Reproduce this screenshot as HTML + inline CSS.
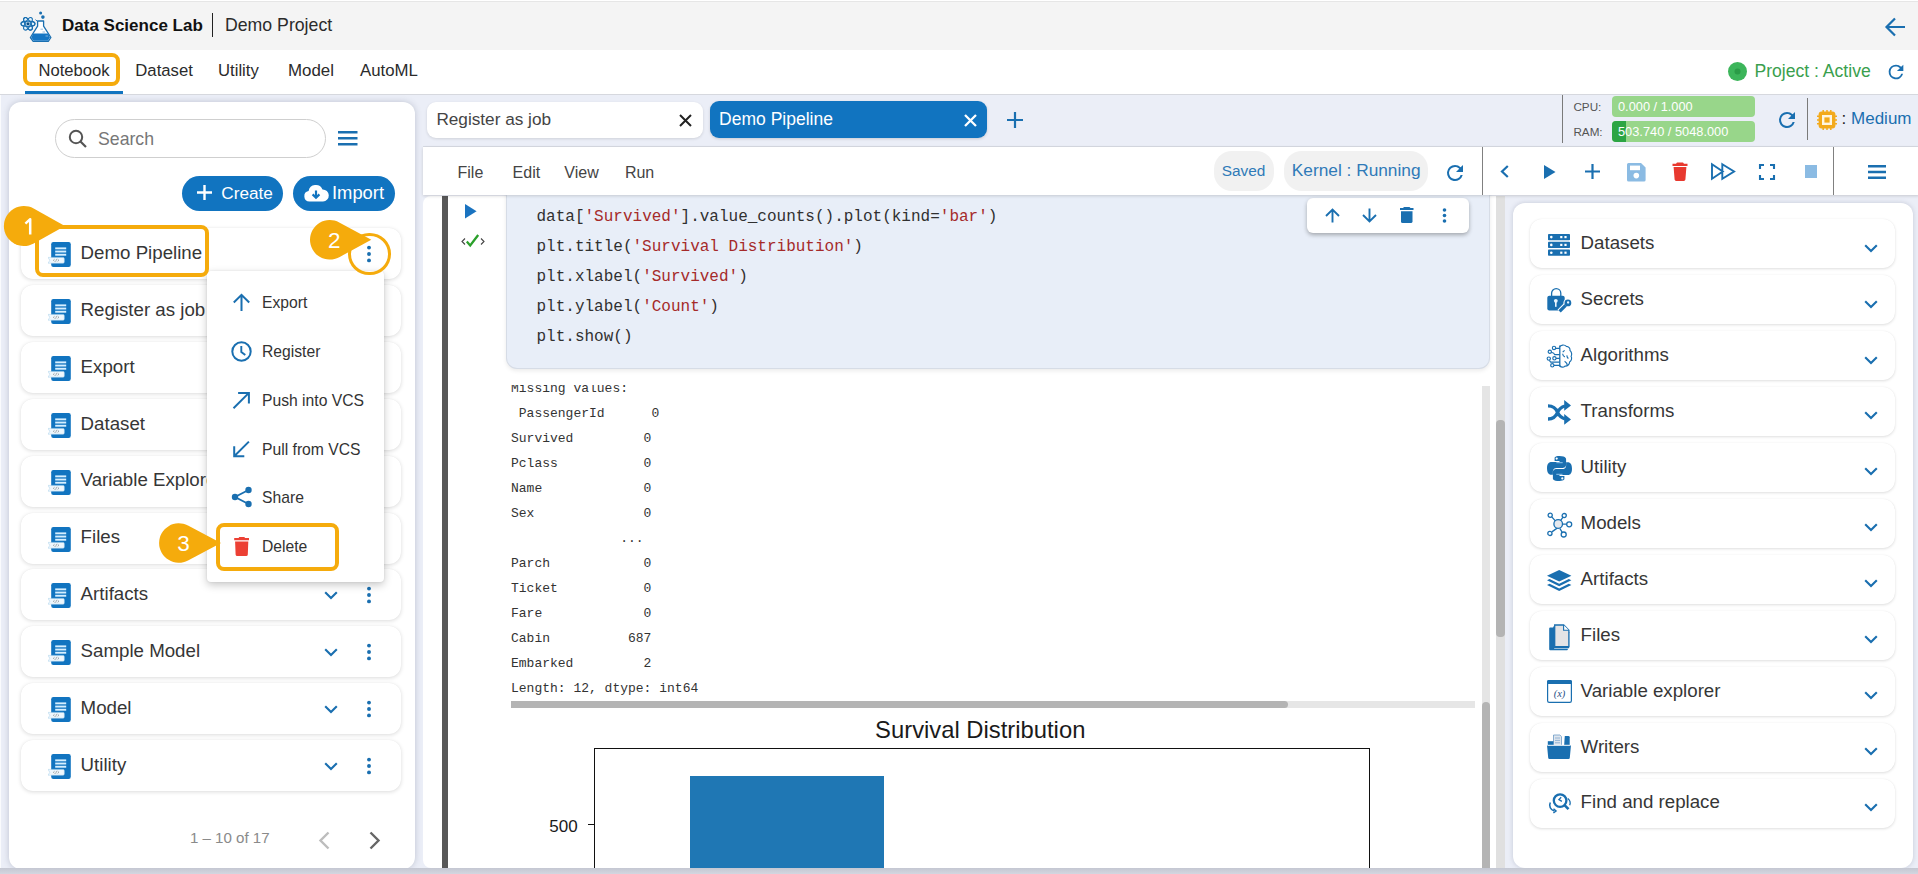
<!DOCTYPE html>
<html><head><meta charset="utf-8"><style>
*{box-sizing:border-box;margin:0;padding:0}
html,body{width:1918px;height:874px;overflow:hidden}
body{position:relative;background:#ebeef7;font-family:"Liberation Sans",sans-serif;color:#2b2b2b}
.a{position:absolute}
.t{position:absolute;line-height:1;white-space:pre}
svg{position:absolute;overflow:visible}
.card{position:absolute;left:21px;width:380px;height:51px;background:#fff;border-radius:12px;box-shadow:0 1px 4px rgba(0,0,0,.14),0 0 1px rgba(0,0,0,.06)}
.rcard{position:absolute;left:1530px;width:365px;height:49px;background:#fff;border-radius:12px;box-shadow:0 1px 3px rgba(0,0,0,.13),0 0 1px rgba(0,0,0,.06)}
.ob{position:absolute;border:4px solid #f5ab0c;border-radius:8px}
</style></head><body>
<svg width="0" height="0" style="position:absolute"><defs>
<symbol id="nbicon" viewBox="0 0 24 26"><rect x="3.2" y="0" width="19.6" height="25" rx="2.2" fill="#1174c0"/><rect x="7.2" y="5.4" width="11" height="1.9" fill="#d6efff"/><rect x="7.2" y="8.6" width="11" height="1.9" fill="#d6efff"/><rect x="7.2" y="11.8" width="11" height="1.9" fill="#d6efff"/><path d="M0 15.4h15a1.3 1.3 0 0 1 1.3 1.3v3.2a1.3 1.3 0 0 1-1.3 1.3H0l1.8-2.9z" fill="#eef7fd" stroke="#a9d0ea" stroke-width=".5"/><path d="M6.6 17.2l-1.3 1.1 1.3 1.1M9.6 17.2l1.3 1.1-1.3 1.1M8.6 16.9l-1 2.9" fill="none" stroke="#666" stroke-width=".5"/></symbol>
<symbol id="chev" viewBox="0 0 14 9"><path d="M1.2 1.2L7 7l5.8-5.8" fill="none" stroke="#1a6fb0" stroke-width="2.1"/></symbol>
<symbol id="kebab" viewBox="0 0 6 18"><circle cx="3" cy="2.6" r="1.95" fill="#1a6fb0"/><circle cx="3" cy="9" r="1.95" fill="#1a6fb0"/><circle cx="3" cy="15.4" r="1.95" fill="#1a6fb0"/></symbol>
<symbol id="refresh" viewBox="0 0 24 24"><path d="M17.65 6.35A7.96 7.96 0 0 0 12 4a8 8 0 1 0 7.73 10h-2.08A6 6 0 1 1 12 6c1.66 0 3.14.69 4.22 1.78L13 11h7V4l-2.35 2.35z" fill="#1a6fb0"/></symbol>
</defs></svg>
<div class="a" style="left:0;top:0;width:1918px;height:50px;background:#f4f4f4;border-top:1px solid #fff"></div><div class="a" style="left:0;top:1px;width:1918px;height:1px;background:#e6e6e6"></div>
<svg style="left:15px;top:5px" width="45" height="40" viewBox="0 0 45 40">
<g fill="#e3f3fd" stroke="#1a6fb0" stroke-width="1.1"><ellipse cx="13" cy="18.8" rx="7" ry="2.7"/><ellipse cx="13" cy="18.8" rx="7" ry="2.7" transform="rotate(60 13 18.8)"/><ellipse cx="13" cy="18.8" rx="7" ry="2.7" transform="rotate(-60 13 18.8)"/></g>
<g fill="none" stroke="#1a6fb0" stroke-width="1.1"><ellipse cx="13" cy="18.8" rx="7" ry="2.7" transform="rotate(60 13 18.8)"/><ellipse cx="13" cy="18.8" rx="7" ry="2.7"/></g>
<circle cx="13" cy="18.8" r="1.6" fill="#0d4f86"/>
<path d="M22.6 16H28.6V21.2L35.9 32.5L33.3 36.4H18.2L15.4 32.5L22.6 21.2Z" fill="#fff" stroke="#1a6fb0" stroke-width="1.3" stroke-linejoin="round"/>
<path d="M22 16.2l-1.4-1.6" stroke="#1a6fb0" stroke-width="1"/>
<path d="M18.2 28.6H33.2L35 32.5L32.8 35.7H18.7L16.3 32.5Z" fill="#1576c4"/>
<path d="M25.5 24.2h2.5M27.5 27h2.6M30.5 31h2.6" stroke="#8cb8dc" stroke-width=".9"/>
<circle cx="25.6" cy="8" r="1.5" fill="#1a6fb0"/><circle cx="27.9" cy="12.1" r="1.8" fill="#1a6fb0"/>
</svg>
<div class="t" style="left:62.0px;top:17.00px;font-size:17px;color:#111;font-weight:700;">Data Science Lab</div>
<div class="a" style="left:211.5px;top:13px;width:1.6px;height:24px;background:#222"></div>
<div class="t" style="left:225.0px;top:17.00px;font-size:17.7px;color:#2b2b2b;font-weight:400;">Demo Project</div>
<svg style="left:1884px;top:16px" width="22" height="22" viewBox="0 0 22 22"><path d="M21 11H3M11 2.5L2.5 11l8.5 8.5" fill="none" stroke="#1a6fb0" stroke-width="2.2"/></svg>
<div class="a" style="left:0;top:50px;width:1918px;height:45px;background:#fff;border-bottom:1px solid #d6d8de"></div>
<div class="t" style="left:38.5px;top:63.00px;font-size:16.6px;color:#2b2b2b;font-weight:400;">Notebook</div>
<div class="t" style="left:135.3px;top:63.00px;font-size:16.7px;color:#2b2b2b;font-weight:400;">Dataset</div>
<div class="t" style="left:218.0px;top:63.00px;font-size:16.7px;color:#2b2b2b;font-weight:400;">Utility</div>
<div class="t" style="left:288.0px;top:63.00px;font-size:16.9px;color:#2b2b2b;font-weight:400;">Model</div>
<div class="t" style="left:360.0px;top:63.00px;font-size:16.8px;color:#2b2b2b;font-weight:400;">AutoML</div>
<div class="a" style="left:25px;top:91px;width:98px;height:3px;background:#1174c0"></div>
<div class="ob" style="left:23px;top:53px;width:96.5px;height:33px"></div>
<svg style="left:1728px;top:61.8px" width="19" height="19" viewBox="0 0 19 19"><circle cx="9.5" cy="9.5" r="9.5" fill="#3cb55a"/><circle cx="9.5" cy="9.5" r="3" fill="#2a9c47"/></svg>
<div class="t" style="left:1754.4px;top:63.00px;font-size:17.6px;color:#3a9f4e;font-weight:400;">Project : Active</div>
<svg style="left:1884.5px;top:61px" width="22" height="22"><use href="#refresh"/></svg>
<div class="a" style="left:9px;top:102px;width:406px;height:767px;background:#fff;border-radius:12px;box-shadow:0 0 6px rgba(60,70,100,.25)"></div>
<div class="a" style="left:55px;top:118.5px;width:271px;height:39px;border:1px solid #cfcfcf;border-radius:19.5px;background:#fff"></div>
<svg style="left:68px;top:129px" width="20" height="20" viewBox="0 0 20 20"><circle cx="8" cy="8" r="6.2" fill="none" stroke="#555" stroke-width="2"/><path d="M12.5 12.5l5.5 5.5" stroke="#555" stroke-width="2.2"/></svg>
<div class="t" style="left:98.0px;top:131.00px;font-size:17.7px;color:#777;font-weight:400;">Search</div>
<svg style="left:338px;top:131px" width="20" height="15" viewBox="0 0 20 15"><path d="M0 1.3h19.5M0 7.3h19.5M0 13.3h19.5" stroke="#1a6fb0" stroke-width="2.4"/></svg>
<div class="a" style="left:182px;top:176px;width:101px;height:35px;border-radius:18px;background:#1174c0"></div>
<svg style="left:197px;top:185px" width="15" height="15" viewBox="0 0 15 15"><path d="M7.5 0v15M0 7.5h15" stroke="#fff" stroke-width="2.4"/></svg>
<div class="t" style="left:221.3px;top:185.00px;font-size:17.2px;color:#fff;font-weight:400;">Create</div>
<div class="a" style="left:293px;top:176px;width:102px;height:35px;border-radius:18px;background:#1174c0"></div>
<svg style="left:303.5px;top:183px" width="24" height="19" viewBox="0 0 24 19"><path d="M5.5 18.5A5.3 5.3 0 0 1 4.6 8a7.3 7.3 0 0 1 13.9-1.6A5.4 5.4 0 0 1 19 18.5z" fill="#fff"/><path d="M12 7.5v7M8.6 11.4l3.4 3.4 3.4-3.4" fill="none" stroke="#1174c0" stroke-width="2.2"/></svg>
<div class="t" style="left:332.0px;top:184.00px;font-size:18.35px;color:#fff;font-weight:400;">Import</div>
<div class="card" style="top:228.0px"></div>
<svg style="left:48px;top:242.0px" width="24" height="26"><use href="#nbicon"/></svg>
<div class="t" style="left:80.6px;top:244.00px;font-size:18.7px;color:#363636;font-weight:400;">Demo Pipeline</div>
<div class="card" style="top:284.9px"></div>
<svg style="left:48px;top:298.9px" width="24" height="26"><use href="#nbicon"/></svg>
<div class="t" style="left:80.6px;top:301.00px;font-size:18.7px;color:#363636;font-weight:400;">Register as job</div>
<div class="card" style="top:341.8px"></div>
<svg style="left:48px;top:355.8px" width="24" height="26"><use href="#nbicon"/></svg>
<div class="t" style="left:80.6px;top:358.00px;font-size:18.7px;color:#363636;font-weight:400;">Export</div>
<div class="card" style="top:398.7px"></div>
<svg style="left:48px;top:412.7px" width="24" height="26"><use href="#nbicon"/></svg>
<div class="t" style="left:80.6px;top:415.00px;font-size:18.7px;color:#363636;font-weight:400;">Dataset</div>
<div class="card" style="top:455.6px"></div>
<svg style="left:48px;top:469.6px" width="24" height="26"><use href="#nbicon"/></svg>
<div class="t" style="left:80.6px;top:471.00px;font-size:18.7px;color:#363636;font-weight:400;">Variable Explorer</div>
<div class="card" style="top:512.5px"></div>
<svg style="left:48px;top:526.5px" width="24" height="26"><use href="#nbicon"/></svg>
<div class="t" style="left:80.6px;top:528.00px;font-size:18.7px;color:#363636;font-weight:400;">Files</div>
<div class="card" style="top:569.4px"></div>
<svg style="left:48px;top:583.4px" width="24" height="26"><use href="#nbicon"/></svg>
<div class="t" style="left:80.6px;top:585.00px;font-size:18.7px;color:#363636;font-weight:400;">Artifacts</div>
<svg style="left:324px;top:591.4px" width="14" height="9"><use href="#chev"/></svg>
<svg style="left:366px;top:586.4px" width="6" height="18"><use href="#kebab"/></svg>
<div class="card" style="top:626.3px"></div>
<svg style="left:48px;top:640.3px" width="24" height="26"><use href="#nbicon"/></svg>
<div class="t" style="left:80.6px;top:642.00px;font-size:18.7px;color:#363636;font-weight:400;">Sample Model</div>
<svg style="left:324px;top:648.3px" width="14" height="9"><use href="#chev"/></svg>
<svg style="left:366px;top:643.3px" width="6" height="18"><use href="#kebab"/></svg>
<div class="card" style="top:683.2px"></div>
<svg style="left:48px;top:697.2px" width="24" height="26"><use href="#nbicon"/></svg>
<div class="t" style="left:80.6px;top:699.00px;font-size:18.7px;color:#363636;font-weight:400;">Model</div>
<svg style="left:324px;top:705.2px" width="14" height="9"><use href="#chev"/></svg>
<svg style="left:366px;top:700.2px" width="6" height="18"><use href="#kebab"/></svg>
<div class="card" style="top:740.1px"></div>
<svg style="left:48px;top:754.1px" width="24" height="26"><use href="#nbicon"/></svg>
<div class="t" style="left:80.6px;top:756.00px;font-size:18.7px;color:#363636;font-weight:400;">Utility</div>
<svg style="left:324px;top:762.1px" width="14" height="9"><use href="#chev"/></svg>
<svg style="left:366px;top:757.1px" width="6" height="18"><use href="#kebab"/></svg>
<svg style="left:366px;top:245px" width="6" height="18"><use href="#kebab"/></svg>
<div class="t" style="left:189.9px;top:830.00px;font-size:15.1px;color:#8a8a8a;font-weight:400;">1 – 10 of 17</div>
<svg style="left:317px;top:831px" width="14" height="19" viewBox="0 0 14 19"><path d="M11.5 1.5L3.5 9.5l8 8" fill="none" stroke="#bdbdbd" stroke-width="2.4"/></svg>
<svg style="left:368px;top:831px" width="14" height="19" viewBox="0 0 14 19"><path d="M2.5 1.5l8 8-8 8" fill="none" stroke="#666" stroke-width="2.4"/></svg>
<div class="a" style="left:207px;top:271px;width:177px;height:311px;background:#fff;border-radius:4px;box-shadow:0 3px 8px rgba(0,0,0,.22),0 0 2px rgba(0,0,0,.1)"></div>
<div class="t" style="left:262.0px;top:295.00px;font-size:15.7px;color:#333;font-weight:400;">Export</div>
<div class="t" style="left:262.0px;top:344.00px;font-size:15.7px;color:#333;font-weight:400;">Register</div>
<div class="t" style="left:262.0px;top:393.00px;font-size:15.7px;color:#333;font-weight:400;">Push into VCS</div>
<div class="t" style="left:262.0px;top:442.00px;font-size:15.7px;color:#333;font-weight:400;">Pull from VCS</div>
<div class="t" style="left:262.0px;top:490.00px;font-size:15.7px;color:#333;font-weight:400;">Share</div>
<div class="t" style="left:262.0px;top:539.00px;font-size:15.7px;color:#333;font-weight:400;">Delete</div>
<svg style="left:232px;top:293px" width="19" height="19" viewBox="0 0 19 19"><path d="M9.5 18V2M1.8 9.5L9.5 1.8l7.7 7.7" fill="none" stroke="#1a6fb0" stroke-width="2"/></svg>
<svg style="left:231px;top:341px" width="21" height="21" viewBox="0 0 21 21"><circle cx="10.5" cy="10.5" r="9.2" fill="none" stroke="#1a6fb0" stroke-width="2"/><path d="M10.3 5v6l4 3" fill="none" stroke="#1a6fb0" stroke-width="1.9"/></svg>
<svg style="left:232px;top:391px" width="19" height="19" viewBox="0 0 19 19"><path d="M1.5 17.3L16.9 1.9M6.1 1.9h10.8v10.7" fill="none" stroke="#1a6fb0" stroke-width="2"/></svg>
<svg style="left:232px;top:440px" width="19" height="19" viewBox="0 0 19 19"><path d="M16.9 1.6L2.2 16.2M2.2 6.2V16.2H12.3" fill="none" stroke="#1a6fb0" stroke-width="2"/></svg>
<svg style="left:231px;top:486px" width="22" height="22" viewBox="0 0 22 22"><circle cx="17.5" cy="4" r="3.2" fill="#1a6fb0"/><circle cx="4" cy="11" r="3.2" fill="#1a6fb0"/><circle cx="17.5" cy="18" r="3.2" fill="#1a6fb0"/><path d="M17.5 4L4 11l13.5 7" fill="none" stroke="#1a6fb0" stroke-width="1.8"/></svg>
<svg style="left:234px;top:536.8px" width="16" height="20" viewBox="0 0 16 20"><path d="M5.2 0h5.2l.6.9H15v2.4H.2V.9h4.4z" fill="#ec4034"/><path d="M1.1 4.4h13.2l-.5 13.2a1.6 1.6 0 0 1-1.6 1.5H3.2a1.6 1.6 0 0 1-1.6-1.5z" fill="#ec4034"/></svg>
<div class="ob" style="left:35.3px;top:225px;width:174.2px;height:51.5px"></div>
<div class="ob" style="left:216px;top:523px;width:123px;height:47.5px"></div>
<div class="a" style="left:348.4px;top:233px;width:42.4px;height:41.6px;border:3.6px solid #f5ab0c;border-radius:50%"></div>
<svg style="left:0;top:0" width="1" height="1"><path d="M64.90 226.00L33.66 208.54A20 20 0 1 0 33.66 243.46Z" fill="#f5ab0c"/></svg>
<svg style="left:24px;top:217.5px" width="9" height="17" viewBox="0 0 9 17"><path d="M6.2 16.5V1.2L1.4 5.6" fill="none" stroke="#fff" stroke-width="2.5" stroke-linejoin="round"/></svg>
<svg style="left:0;top:0" width="1" height="1"><path d="M371.30 239.80L339.25 222.40A19.8 19.8 0 1 0 339.25 257.20Z" fill="#f5ab0c"/></svg>
<div class="t" style="left:334.2px;top:230.00px;font-size:22.5px;color:#fff;font-weight:400;transform:translateX(-50%)">2</div>
<svg style="left:0;top:0" width="1" height="1"><path d="M221.00 543.00L188.00 525.58A19.7 19.7 0 1 0 188.00 560.42Z" fill="#f5ab0c"/></svg>
<div class="t" style="left:183.6px;top:533.00px;font-size:22.5px;color:#fff;font-weight:400;transform:translateX(-50%)">3</div>
<div class="a" style="left:422.5px;top:146px;width:1496px;height:1px;background:#d8dce4"></div>
<div class="a" style="left:426.7px;top:101.7px;width:276px;height:36px;background:#fff;border-radius:9px;box-shadow:0 1px 3px rgba(0,0,0,.12)"></div>
<div class="t" style="left:436.4px;top:111.00px;font-size:17.2px;color:#444;font-weight:400;">Register as job</div>
<svg style="left:679px;top:113.5px" width="13" height="13" viewBox="0 0 13 13"><path d="M1 1l11 11M12 1L1 12" stroke="#222" stroke-width="2"/></svg>
<div class="a" style="left:710.3px;top:101px;width:277px;height:37px;background:#1174c0;border-radius:9px;box-shadow:0 1px 3px rgba(0,0,0,.15)"></div>
<div class="t" style="left:719.1px;top:111.00px;font-size:17.5px;color:#fff;font-weight:400;">Demo Pipeline</div>
<svg style="left:964px;top:113.5px" width="13" height="13" viewBox="0 0 13 13"><path d="M1 1l11 11M12 1L1 12" stroke="#fff" stroke-width="2.3"/></svg>
<svg style="left:1007px;top:111.5px" width="16" height="16" viewBox="0 0 16 16"><path d="M8 0v16M0 8h16" stroke="#1a6fb0" stroke-width="2.2"/></svg>
<div class="a" style="left:1562px;top:95px;width:1px;height:48px;background:#7a7a7a"></div>
<div class="t" style="left:1573.4px;top:101.00px;font-size:11.7px;color:#555;font-weight:400;">CPU:</div>
<div class="t" style="left:1573.4px;top:126.00px;font-size:11.7px;color:#555;font-weight:400;">RAM:</div>
<div class="a" style="left:1612px;top:96px;width:143px;height:20.5px;background:#98d68a;border-radius:4px"></div>
<div class="a" style="left:1612px;top:121px;width:143px;height:20.8px;background:#98d68a;border-radius:4px;overflow:hidden"><div style="width:14px;height:100%;background:#2ca544"></div></div>
<div class="t" style="left:1618.0px;top:101.00px;font-size:12.8px;color:#fff;font-weight:400;">0.000 / 1.000</div>
<div class="t" style="left:1618.0px;top:126.00px;font-size:12.8px;color:#fff;font-weight:400;">503.740 / 5048.000</div>
<svg style="left:1774.5px;top:107.5px" width="24" height="24"><use href="#refresh"/></svg>
<div class="a" style="left:1807px;top:98px;width:1px;height:42px;background:#7a7a7a"></div>
<svg style="left:1816.5px;top:109.5px" width="20" height="20" viewBox="0 0 20 20"><rect x="1.6" y="1.6" width="16.8" height="16.8" rx="3" fill="#f3aa1c"/><rect x="5" y="5" width="10" height="10" fill="#fff6e0"/><rect x="7.4" y="7.4" width="5.2" height="5.2" fill="#f3aa1c"/><path d="M6.2 0v2M10 0v2M13.8 0v2M6.2 18v2M10 18v2M13.8 18v2M0 6.2h2M0 10h2M0 13.8h2M18 6.2h2M18 10h2M18 13.8h2" stroke="#f3aa1c" stroke-width="1.5"/></svg>
<div class="t" style="left:1841.6px;top:110px;font-size:17px;color:#1a6fb0"><span style="color:#222">:</span> Medium</div>
<div class="a" style="left:422.5px;top:196px;width:1082px;height:672px;background:#fff;overflow:hidden;border-radius:8px 0 0 8px">
<div class="a" style="left:19.5px;top:0;width:6px;height:680px;background:#585858"></div>
</div>
<div class="a" style="left:505.5px;top:180px;width:984px;height:188.5px;background:#e8eef8;border:1px solid #d6dce6;border-top:none;border-radius:0 0 11px 11px;box-shadow:0 2px 4px rgba(0,0,0,.08)"></div>
<svg style="left:465px;top:204.4px" width="12" height="14.4" viewBox="0 0 12 14.4"><path d="M0 0l11.6 7.2L0 14.4z" fill="#1a73c0"/></svg>
<svg style="left:461px;top:233.5px" width="24" height="13" viewBox="0 0 24 13"><path d="M4 4.5L1 7.5l3 3M20 4.5l3 3-3 3" fill="none" stroke="#444" stroke-width="1.1"/><path d="M5.8 7.6l3.4 3.8L17.2 1" fill="none" stroke="#2aa02a" stroke-width="2.3"/></svg>
<div class="t" style="left:536.5px;top:209.00px;font-size:16px;color:#303030;font-family:'Liberation Mono',monospace;">data[<span style="color:#a52a2a">'Survived'</span>].value_counts().plot(kind=<span style="color:#a52a2a">'bar'</span>)</div>
<div class="t" style="left:536.5px;top:239.00px;font-size:16px;color:#303030;font-family:'Liberation Mono',monospace;">plt.title(<span style="color:#a52a2a">'Survival Distribution'</span>)</div>
<div class="t" style="left:536.5px;top:269.00px;font-size:16px;color:#303030;font-family:'Liberation Mono',monospace;">plt.xlabel(<span style="color:#a52a2a">'Survived'</span>)</div>
<div class="t" style="left:536.5px;top:299.00px;font-size:16px;color:#303030;font-family:'Liberation Mono',monospace;">plt.ylabel(<span style="color:#a52a2a">'Count'</span>)</div>
<div class="t" style="left:536.5px;top:329.00px;font-size:16px;color:#303030;font-family:'Liberation Mono',monospace;">plt.show()</div>
<div class="a" style="left:1307px;top:197.6px;width:162px;height:35.8px;background:#fff;border-radius:6px;box-shadow:0 2px 4px rgba(0,0,0,.3)"></div>
<svg style="left:1324.5px;top:207.5px" width="15" height="15" viewBox="0 0 15 15"><path d="M7.5 14.5V1.5M1 8l6.5-6.5L14 8" fill="none" stroke="#1a6fb0" stroke-width="1.9"/></svg>
<svg style="left:1362px;top:207.5px" width="15" height="15" viewBox="0 0 15 15"><path d="M7.5 .5v13M1 7l6.5 6.5L14 7" fill="none" stroke="#1a6fb0" stroke-width="1.9"/></svg>
<svg style="left:1400px;top:206.5px" width="13.5" height="16" viewBox="0 0 13.5 16"><path d="M4 0h5.5l1 1.1h3v2H0v-2h3z" fill="#1a6fb0"/><path d="M1 4.2h11.5V14.4a1.6 1.6 0 0 1-1.6 1.6H2.6A1.6 1.6 0 0 1 1 14.4z" fill="#1a6fb0"/></svg>
<svg style="left:1442px;top:207.5px" width="5" height="15" viewBox="0 0 5 15"><circle cx="2.5" cy="2" r="1.8" fill="#1a6fb0"/><circle cx="2.5" cy="7.5" r="1.8" fill="#1a6fb0"/><circle cx="2.5" cy="13" r="1.8" fill="#1a6fb0"/></svg>
<div class="a" style="left:505px;top:385px;width:977px;height:483px;overflow:hidden">
<div class="t" style="left:6px;top:-3.00px;font-size:13px;font-family:'Liberation Mono',monospace;color:#333">Missing values:</div>
<div class="t" style="left:6px;top:22.00px;font-size:13px;font-family:'Liberation Mono',monospace;color:#333"> PassengerId      0</div>
<div class="t" style="left:6px;top:47.00px;font-size:13px;font-family:'Liberation Mono',monospace;color:#333">Survived         0</div>
<div class="t" style="left:6px;top:72.00px;font-size:13px;font-family:'Liberation Mono',monospace;color:#333">Pclass           0</div>
<div class="t" style="left:6px;top:97.00px;font-size:13px;font-family:'Liberation Mono',monospace;color:#333">Name             0</div>
<div class="t" style="left:6px;top:122.00px;font-size:13px;font-family:'Liberation Mono',monospace;color:#333">Sex              0</div>
<div class="t" style="left:6px;top:147.00px;font-size:13px;font-family:'Liberation Mono',monospace;color:#333">              ...</div>
<div class="t" style="left:6px;top:172.00px;font-size:13px;font-family:'Liberation Mono',monospace;color:#333">Parch            0</div>
<div class="t" style="left:6px;top:197.00px;font-size:13px;font-family:'Liberation Mono',monospace;color:#333">Ticket           0</div>
<div class="t" style="left:6px;top:222.00px;font-size:13px;font-family:'Liberation Mono',monospace;color:#333">Fare             0</div>
<div class="t" style="left:6px;top:247.00px;font-size:13px;font-family:'Liberation Mono',monospace;color:#333">Cabin          687</div>
<div class="t" style="left:6px;top:272.00px;font-size:13px;font-family:'Liberation Mono',monospace;color:#333">Embarked         2</div>
<div class="t" style="left:6px;top:297.00px;font-size:13px;font-family:'Liberation Mono',monospace;color:#333">Length: 12, dtype: int64</div>
</div>
<div class="a" style="left:511px;top:700.5px;width:964px;height:7px;background:#e6e6e6"></div>
<div class="a" style="left:511px;top:700.5px;width:777px;height:7px;background:#b4b4b4;border-radius:0 4px 4px 0"></div>
<div class="a" style="left:1482px;top:386px;width:8px;height:482px;background:#e5e5e5"></div>
<div class="a" style="left:1482px;top:702px;width:8px;height:166px;background:#b4b4b4;border-radius:4px 4px 0 0"></div>
<div class="t" style="left:875.1px;top:718.00px;font-size:23.8px;color:#1a1a1a;font-weight:400;">Survival Distribution</div>
<div class="a" style="left:594px;top:747.6px;width:776px;height:130px;border:1.4px solid #111;background:#fff"></div>
<div class="a" style="left:689.8px;top:775.9px;width:194px;height:100px;background:#1f77b4"></div>
<div class="a" style="left:588px;top:824px;width:6px;height:1.3px;background:#111"></div>
<div class="t" style="left:549.3px;top:818.00px;font-size:17px;color:#1a1a1a;font-weight:400;">500</div>
<div class="a" style="left:1496px;top:196px;width:8.5px;height:672px;background:#e0e0e0"></div>
<div class="a" style="left:1496px;top:420px;width:8.5px;height:216.5px;background:#b4b4b4;border-radius:4px"></div>
<div class="a" style="left:1513px;top:203px;width:400px;height:665px;background:#fff;border-radius:12px;box-shadow:0 0 5px rgba(60,70,100,.22)"></div>
<div class="rcard" style="top:219.2px"></div>
<div class="t" style="left:1580.6px;top:234.00px;font-size:18.7px;color:#363636;font-weight:400;">Datasets</div>
<svg style="left:1864px;top:243.6px" width="14" height="9"><use href="#chev"/></svg>
<div class="rcard" style="top:275.1px"></div>
<div class="t" style="left:1580.6px;top:290.00px;font-size:18.7px;color:#363636;font-weight:400;">Secrets</div>
<svg style="left:1864px;top:299.5px" width="14" height="9"><use href="#chev"/></svg>
<div class="rcard" style="top:331.1px"></div>
<div class="t" style="left:1580.6px;top:346.00px;font-size:18.7px;color:#363636;font-weight:400;">Algorithms</div>
<svg style="left:1864px;top:355.5px" width="14" height="9"><use href="#chev"/></svg>
<div class="rcard" style="top:387.0px"></div>
<div class="t" style="left:1580.6px;top:402.00px;font-size:18.7px;color:#363636;font-weight:400;">Transforms</div>
<svg style="left:1864px;top:411.4px" width="14" height="9"><use href="#chev"/></svg>
<div class="rcard" style="top:442.9px"></div>
<div class="t" style="left:1580.6px;top:458.00px;font-size:18.7px;color:#363636;font-weight:400;">Utility</div>
<svg style="left:1864px;top:467.3px" width="14" height="9"><use href="#chev"/></svg>
<div class="rcard" style="top:498.8px"></div>
<div class="t" style="left:1580.6px;top:514.00px;font-size:18.7px;color:#363636;font-weight:400;">Models</div>
<svg style="left:1864px;top:523.2px" width="14" height="9"><use href="#chev"/></svg>
<div class="rcard" style="top:554.8px"></div>
<div class="t" style="left:1580.6px;top:570.00px;font-size:18.7px;color:#363636;font-weight:400;">Artifacts</div>
<svg style="left:1864px;top:579.2px" width="14" height="9"><use href="#chev"/></svg>
<div class="rcard" style="top:610.7px"></div>
<div class="t" style="left:1580.6px;top:626.00px;font-size:18.7px;color:#363636;font-weight:400;">Files</div>
<svg style="left:1864px;top:635.1px" width="14" height="9"><use href="#chev"/></svg>
<div class="rcard" style="top:666.6px"></div>
<div class="t" style="left:1580.6px;top:682.00px;font-size:18.7px;color:#363636;font-weight:400;">Variable explorer</div>
<svg style="left:1864px;top:691.0px" width="14" height="9"><use href="#chev"/></svg>
<div class="rcard" style="top:722.6px"></div>
<div class="t" style="left:1580.6px;top:738.00px;font-size:18.7px;color:#363636;font-weight:400;">Writers</div>
<svg style="left:1864px;top:747.0px" width="14" height="9"><use href="#chev"/></svg>
<div class="rcard" style="top:778.5px"></div>
<div class="t" style="left:1580.6px;top:793.00px;font-size:18.7px;color:#363636;font-weight:400;">Find and replace</div>
<svg style="left:1864px;top:802.9px" width="14" height="9"><use href="#chev"/></svg>
<svg style="left:1548px;top:234px" width="22" height="22" viewBox="0 0 22 22">
<rect x="0" y="0" width="22" height="6.2" rx=".8" fill="#1a6fb0"/><rect x="0" y="7.8" width="22" height="6.2" rx=".8" fill="#1a6fb0"/><rect x="0" y="15.6" width="22" height="6.2" rx=".8" fill="#1a6fb0"/>
<g fill="#fff"><circle cx="3.3" cy="3.1" r="1.3"/><circle cx="3.3" cy="10.9" r="1.3"/><circle cx="3.3" cy="18.7" r="1.3"/>
<rect x="12.2" y="2" width="2.2" height="2.2"/><rect x="16.4" y="2" width="2.2" height="2.2"/><rect x="12.2" y="9.8" width="2.2" height="2.2"/><rect x="16.4" y="9.8" width="2.2" height="2.2"/><rect x="12.2" y="17.6" width="2.2" height="2.2"/><rect x="16.4" y="17.6" width="2.2" height="2.2"/></g></svg>
<svg style="left:1547px;top:288px" width="24" height="24" viewBox="0 0 24 24">
<path d="M4.6 8V5.2a4.6 4.6 0 0 1 9.2 0V8" fill="none" stroke="#1a6fb0" stroke-width="1.3"/>
<rect x=".3" y="7.8" width="17.4" height="14.6" rx="2" fill="#1a6fb0"/>
<circle cx="8.8" cy="12.8" r="1.9" fill="#eaf6ff"/><rect x="8" y="12.8" width="1.6" height="6" fill="#eaf6ff"/>
<circle cx="20.9" cy="14.9" r="4.5" fill="#fff"/><path d="M18.6 17.4l-6.2 6.2" stroke="#fff" stroke-width="5.4"/>
<circle cx="20.9" cy="14.9" r="3.4" fill="#1a6fb0"/><path d="M18.6 17.4l-6 6" stroke="#1a6fb0" stroke-width="3.3"/>
<circle cx="21.1" cy="14.5" r="1.15" fill="#eaf6ff"/></svg>
<svg style="left:1547px;top:344px" width="25" height="25" viewBox="0 0 25 25" fill="none" stroke="#1a6fb0" stroke-width="1.15">
<path d="M12.8 1.6V22.8" stroke-width="1.3"/>
<path d="M12.8 2.8C13.6.9 17.4.2 19.4 2.4c2.3.1 3.9 1.9 3.6 4.1 1.8 1.4 2.1 4.2 1.1 5.8 1.1 1.9.4 4.7-1.5 5.6-.1 2.5-2 4.4-4.6 4.2-1.5 1.5-4.6 1.4-5.2-.6"/>
<path d="M17.6 6.4l-1.9 1.8M15.6 9.8c.2 1.6.8 2.7 2.3 3.1M19.8 11.3c.2 1.5.8 2.6 1.6 3.2M17.6 17.2c1.6.9 2.7 2.3 2.8 4.6"/>
<path d="M8.7 4.3h4.1M4.3 8.2c1.8.4 3.1 1.3 3.4 2.4h5.1M9 14.3h3.8M2.3 16.4l1.4 1.7h9.1M7 21.3h5.8"/>
<circle cx="7" cy="3.9" r="1.65"/><circle cx="2.8" cy="7.7" r="1.65"/><circle cx="1.8" cy="14.6" r="1.65"/><circle cx="7.4" cy="14.3" r="1.65"/><circle cx="5.3" cy="21.3" r="1.65"/></svg>
<svg style="left:1548px;top:400px" width="24" height="25" viewBox="0 0 24 25">
<path d="M0 5.8c5 0 8 2.6 9.6 6.5C11.2 8.6 13.5 7 17 6M0 19c5 0 8-2.6 9.6-6.6 1.6 3.6 3.9 5.5 7.4 6.6" fill="none" stroke="#1a6fb0" stroke-width="3.3"/>
<path d="M16.2 0l6.8 5.5-6.8 5.3zM16.2 14l6.8 5.4-6.8 5.4z" fill="#1a6fb0"/></svg>
<svg style="left:1547px;top:456px" width="25" height="25" viewBox="0 0 25 25">
<path d="M12.4 0C7.3 0 7.6 2.2 7.6 2.2v2.9h4.9V6H4.2S0 5.5 0 12.3c0 6.7 3.7 6.5 3.7 6.5h2.2v-3.2s-.1-3.7 3.6-3.7h6.1s3.5.1 3.5-3.4V3.3S19.6 0 12.4 0z" fill="#1a6fb0"/>
<path d="M12.6 25c5.1 0 4.8-2.2 4.8-2.2v-2.9h-4.9V19h8.3s4.2.5 4.2-6.3c0-6.7-3.7-6.5-3.7-6.5h-2.2v3.2s.1 3.7-3.6 3.7H9.4s-3.5-.1-3.5 3.4v5.9S5.4 25 12.6 25z" fill="#1a6fb0"/>
<circle cx="9.7" cy="2.6" r="1.1" fill="#fff"/><circle cx="15.3" cy="22.4" r="1.1" fill="#fff"/>
<path d="M9.4 6.7h6.3M9.3 18.3h6.2" stroke="#9fd0f5" stroke-width=".9"/></svg>
<svg style="left:1547px;top:513px" width="25" height="24" viewBox="0 0 25 24" fill="none" stroke="#1a6fb0" stroke-width="1.3">
<path d="M4.3 3.4l4.5 5M16.2 3.8l-3 4.4M10.5 14.9l-5.6 4M12.8 15.3l2.5 4.2M15.7 11.2h4.6"/>
<circle cx="11.2" cy="11" r="4.3" fill="#e6e9ee"/>
<circle cx="3.2" cy="2.3" r="2.1" fill="#fff"/><circle cx="17.2" cy="2.6" r="2.1" fill="#fff"/><circle cx="22.2" cy="11.3" r="2.5" fill="#fff"/><circle cx="2.9" cy="20.4" r="2.1" fill="#fff"/><circle cx="16.7" cy="21.5" r="2.5" fill="#fff"/></svg>
<svg style="left:1547px;top:570px" width="25" height="21" viewBox="0 0 25 21">
<path d="M12.2 0l12.2 5.8-12.2 5.8L0 5.8z" fill="#1a6fb0"/>
<path d="M0 10.3l2.6-1.2 9.6 4.6 9.6-4.6 2.6 1.2-12.2 5.9z" fill="#1a6fb0"/>
<path d="M0 15l2.6-1.2 9.6 4.6 9.6-4.6 2.6 1.2L12.2 21z" fill="#1a6fb0"/></svg>
<svg style="left:1548.5px;top:623.5px" width="23" height="26" viewBox="0 0 23 26">
<path d="M1.2 3.5h4v21.2h13.6v.8a.8.8 0 0 1-.8.8H1.2a1 1 0 0 1-1-1V4.5a1 1 0 0 1 1-1z" fill="#1a6fb0"/>
<path d="M4.2 2.5h10.3l5.6 5.8v15.9H4.2z" fill="#1a6fb0"/>
<path d="M5.7 1h9l5.2 5.3v16.4H5.7z" fill="#e4e4e6" stroke="#1a6fb0" stroke-width="1.3"/>
<path d="M14.6 1v5.3h5.3" fill="#fff" stroke="#1a6fb0" stroke-width="1.1"/></svg>
<svg style="left:1547px;top:680px" width="25" height="23" viewBox="0 0 25 23">
<rect x=".6" y=".6" width="23.8" height="21.8" rx="1.6" fill="#fff" stroke="#1a6fb0" stroke-width="1.2"/>
<path d="M1.5 0h22a1.5 1.5 0 0 1 1.5 1.5V4H0V1.5A1.5 1.5 0 0 1 1.5 0z" fill="#1a6fb0"/>
<text x="12.5" y="16.8" font-family="Liberation Serif" font-style="italic" font-size="10.5" fill="#1f4f86" text-anchor="middle">(x)</text></svg>
<svg style="left:1547px;top:735px" width="24" height="24" viewBox="0 0 24 24">
<path d="M17.8 1h3.6a1.3 1.3 0 0 1 1.3 1.3v8.5h-5.6z" fill="#1a6fb0"/>
<path d="M6.5 0h6.4l1.6 1.6v9.5H6.5z" fill="#dfe6ee" stroke="#5b8fc0" stroke-width=".7"/>
<path d="M8 3h5M8 5.4h5M8 7.8h5" stroke="#8aaed0" stroke-width=".9"/>
<path d="M.8 6.2h5.6v5H.8z" fill="#1a6fb0"/>
<path d="M0 10h24l-1.2 12.8a1.3 1.3 0 0 1-1.3 1.2H2.5a1.3 1.3 0 0 1-1.3-1.2z" fill="#1a6fb0"/>
<path d="M.3 10.3h23.4" stroke="#fff" stroke-width="1"/></svg>
<svg style="left:1548px;top:791.5px" width="24" height="22" viewBox="0 0 24 22" fill="none" stroke="#1a6fb0">
<circle cx="12.1" cy="8.6" r="6.3" stroke-width="2.3"/>
<path d="M16.5 13.2l4 4" stroke-width="2.6"/>
<path d="M13.2 5.2l-2.3 2.4 3 1.8" stroke-width="1.3"/>
<path d="M2.3 10.5c-1.7 3.6.3 7.5 4 8.6" stroke-width="1.6"/><path d="M5.5 16.8l2.5 2.2-2.6 2" stroke-width="1.5"/>
<path d="M19.8 6.5c2.2 1.8 2.8 4.6 1.9 6.8" stroke-width="1.3"/></svg>
<div class="a" style="left:0;top:95px;width:1px;height:779px;background:#fafbfd"></div>
<div class="a" style="left:0;top:868px;width:1918px;height:6px;background:linear-gradient(#c4c7d2,#d3d6e0)"></div>
<div class="a" style="left:422.5px;top:147px;width:1496px;height:48px;background:#fff;box-shadow:0 1px 3px rgba(0,0,0,.16)"></div>
<div class="t" style="left:457.5px;top:165.00px;font-size:16px;color:#444;font-weight:400;">File</div>
<div class="t" style="left:512.6px;top:165.00px;font-size:16px;color:#444;font-weight:400;">Edit</div>
<div class="t" style="left:564.3px;top:165.00px;font-size:16px;color:#444;font-weight:400;">View</div>
<div class="t" style="left:624.9px;top:165.00px;font-size:16px;color:#444;font-weight:400;">Run</div>
<div class="a" style="left:1214px;top:151px;width:59.5px;height:40px;background:#f1f1f1;border-radius:18px"></div>
<div class="t" style="left:1221.7px;top:163.00px;font-size:15.4px;color:#2f7ab8;font-weight:400;">Saved</div>
<div class="a" style="left:1284.3px;top:151px;width:143.4px;height:40px;background:#f1f1f1;border-radius:18px"></div>
<div class="t" style="left:1291.8px;top:162.00px;font-size:17.3px;color:#2f7ab8;font-weight:400;">Kernel : Running</div>
<svg style="left:1443px;top:160.5px" width="24" height="24"><use href="#refresh"/></svg>
<div class="a" style="left:1482px;top:147px;width:1px;height:48px;background:#808080"></div>
<svg style="left:1500px;top:165px" width="9" height="13" viewBox="0 0 9 13"><path d="M7.8 1L2 6.5 7.8 12" fill="none" stroke="#1a6fb0" stroke-width="2.2"/></svg>
<svg style="left:1544px;top:164.5px" width="12" height="14" viewBox="0 0 12 14"><path d="M0 0l11.5 7L0 14z" fill="#1a6fb0"/></svg>
<svg style="left:1584.5px;top:163.8px" width="15" height="15" viewBox="0 0 15 15"><path d="M7.5 0v15M0 7.5h15" stroke="#1a6fb0" stroke-width="2.2"/></svg>
<svg style="left:1626.5px;top:162.5px" width="19" height="19" viewBox="0 0 19 19"><path d="M1.5 0h12.5l4.6 4.6v12.4a1.6 1.6 0 0 1-1.6 1.6H1.6A1.6 1.6 0 0 1 0 17V1.5A1.5 1.5 0 0 1 1.5 0z" fill="#8bbbe3"/><rect x="3" y="2.6" width="10" height="4.6" fill="#fff"/><circle cx="9.3" cy="12.6" r="2.8" fill="#fff"/></svg>
<svg style="left:1672px;top:162px" width="16" height="19" viewBox="0 0 16 19"><path d="M5 .5h6l1 1.3h3.5v2.2H.5V1.8H4z" fill="#e8392f"/><path d="M1.6 5h12.8l-1 12.6a1.5 1.5 0 0 1-1.5 1.3H4.1a1.5 1.5 0 0 1-1.5-1.3z" fill="#e8392f"/></svg>
<svg style="left:1710.5px;top:163px" width="26" height="17" viewBox="0 0 26 17"><path d="M1 1.2l10.8 7.3L1 15.8zM11.3 1.2l11.8 7.3-11.8 7.3z" fill="none" stroke="#1a6fb0" stroke-width="1.9" stroke-linejoin="miter"/></svg>
<svg style="left:1759px;top:164px" width="16" height="16" viewBox="0 0 16 16"><path d="M1 5V1h4M11 1h4v4M15 11v4h-4M5 15H1v-4" fill="none" stroke="#1a6fb0" stroke-width="2.1"/></svg>
<div class="a" style="left:1804.8px;top:165.2px;width:12.5px;height:12.7px;background:#8bbbe3"></div>
<div class="a" style="left:1833px;top:147px;width:1px;height:48px;background:#808080"></div>
<svg style="left:1868px;top:165px" width="18" height="14" viewBox="0 0 18 14"><path d="M0 1.3h18M0 7h18M0 12.7h18" stroke="#1a6fb0" stroke-width="2.4"/></svg>
</body></html>
